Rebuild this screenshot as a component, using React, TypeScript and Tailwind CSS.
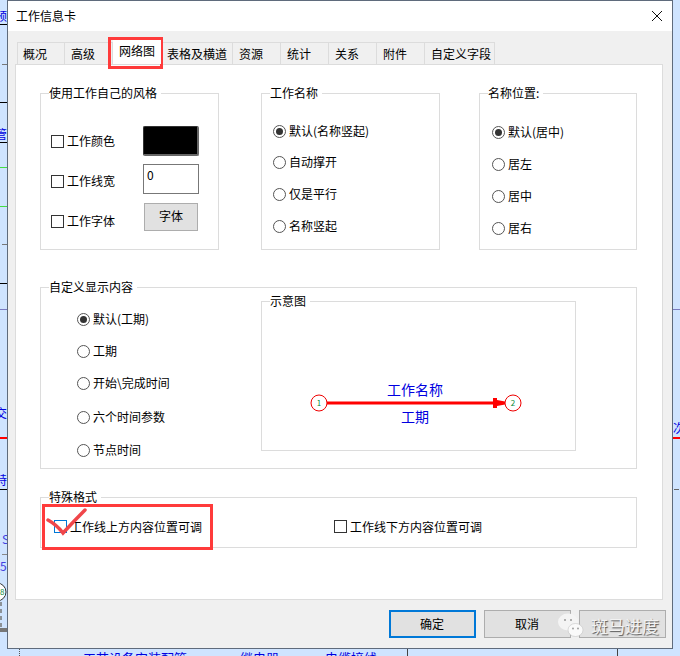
import React from "react";

const font = { fontFamily: '"Noto Sans CJK SC", "Liberation Sans", sans-serif' };

function Group({ title, className, children }: { title: string; className: string; children?: React.ReactNode }) {
  return (
    <div className={"relative border border-[#dcdcdc] " + className}>
      <span className="absolute left-[8px] top-[-9px] bg-white pr-[4px] text-[12px] leading-[16px] text-black whitespace-nowrap">{title}</span>
      {children}
    </div>
  );
}

function Radio({ label, checked, className = "" }: { label: string; checked?: boolean; className?: string }) {
  return (
    <div className={"flex items-center h-[16px] text-[12px] leading-[16px] text-black whitespace-nowrap " + className}>
      <span className="flex items-center justify-center w-[13px] h-[13px] rounded-full border border-[#555] bg-white mr-[3px] shrink-0">
        {checked && <span className="block w-[7px] h-[7px] rounded-full bg-[#333]" />}
      </span>
      {label}
    </div>
  );
}

function Check({ label, focus }: { label: string; focus?: boolean }) {
  return (
    <div className="flex items-center h-[16px] text-[12px] leading-[16px] text-black whitespace-nowrap">
      <span className={"block w-[13px] h-[13px] border bg-white mr-[3px] shrink-0 " + (focus ? "border-[#0078d7]" : "border-[#333]")} />
      {label}
    </div>
  );
}

const tabs = ["概况", "高级", "网络图", "表格及横道", "资源", "统计", "关系", "附件", "自定义字段"];
const tabW = [48, 48, 48, 72, 48, 48, 48, 48, 70];

const bgLines: { x: number; y: number; w: number; c: string }[] = [
  { x: 0, y: 24, w: 7, c: "#000000" },
  { x: 2, y: 64, w: 5, c: "#777777" },
  { x: 0, y: 102, w: 7, c: "#000000" },
  { x: 0, y: 142, w: 7, c: "#000000" },
  { x: 0, y: 167, w: 7, c: "#44dd44" },
  { x: 0, y: 206, w: 7, c: "#44dd44" },
  { x: 2, y: 244, w: 5, c: "#777777" },
  { x: 0, y: 283, w: 7, c: "#000000" },
  { x: 0, y: 309, w: 7, c: "#7a7ac0" },
  { x: 0, y: 489, w: 7, c: "#000000" },
  { x: 2, y: 554, w: 5, c: "#888888" },
  { x: 674, y: 489, w: 5, c: "#666666" },
  { x: 673, y: 309, w: 7, c: "#7a7ac0" },
];

export default function App() {
  return (
    <div style={font} className="relative w-[680px] h-[656px] overflow-hidden bg-[#cfe4ff]">
      {/* diagram fragments behind the dialog */}
      <span className="absolute left-[-5px] top-[8px] text-[12px] leading-[16px] text-[#0000e0]">预</span>
      <span className="absolute left-[-5px] top-[126px] text-[12px] leading-[16px] text-[#0000e0]">管</span>
      <span className="absolute left-[-5px] top-[405px] text-[12px] leading-[16px] text-[#0000e0]">交</span>
      <span className="absolute left-[-5px] top-[472px] text-[12px] leading-[16px] text-[#0000e0]">特</span>
      <span className="absolute left-[2px] top-[531px] text-[12px] leading-[16px] text-[#4040e0]">S</span>
      <span className="absolute left-[0px] top-[558px] text-[12px] leading-[16px] text-[#4040e0]">5</span>
      <span className="absolute left-[673px] top-[420px] text-[12px] leading-[16px] text-[#0000e0]">次</span>
      <span className="absolute left-[83px] top-[650px] text-[13px] leading-[16px] text-[#0000e0] whitespace-nowrap">工艺设备安装配管</span>
      <span className="absolute left-[240px] top-[650px] text-[13px] leading-[16px] text-[#0000e0] whitespace-nowrap">继电器</span>
      <span className="absolute left-[325px] top-[650px] text-[13px] leading-[16px] text-[#0000e0] whitespace-nowrap">电缆接线</span>
      {bgLines.map((l) => (
        <div key={l.x + "-" + l.y} style={{ left: l.x, top: l.y, width: l.w, backgroundColor: l.c }} className="absolute h-px" />
      ))}
      <div className="absolute left-0 top-[437px] w-[7px] h-[2px] bg-[#f00]" />
      <div className="absolute left-[673px] top-[437px] w-[7px] h-[2px] bg-[#f00]" />
      <div className="absolute left-[407px] top-[649px] w-px h-[7px] bg-[#444]" />
      <div className="absolute left-[617px] top-[649px] w-px h-[7px] bg-[#444]" />
      <div className="absolute left-[19px] top-[649px] w-px h-[7px] border-l border-dotted border-[#555]" />
      <svg width="8" height="50" viewBox="0 0 8 50" className="absolute left-0 top-[583px]">
        <circle cx="-3" cy="9" r="9" fill="#fff" stroke="#333" />
        <text x="0" y="12" fontSize="8" fill="#0a8a3a">8</text>
        <path d="M1 19 V46" stroke="#777" strokeWidth="1.5" strokeDasharray="4 3" />
        <path d="M0 45 H7 V49 H0 Z" fill="#777" />
      </svg>

      {/* dialog */}
      <div className="relative ml-[7px] w-[666px] h-[649px] border border-[#5f6b7c] bg-[#f0f0f0] flex flex-col">
        <div className="h-[30px] bg-white flex items-center justify-between pl-[8px] pr-[8px] shrink-0">
          <span className="text-[12px] text-black leading-[16px]">工作信息卡</span>
          <svg width="12" height="12" viewBox="0 0 12 12" className="mr-px"><path d="M1 1 L11 11 M11 1 L1 11" stroke="#111" strokeWidth="1" fill="none" /></svg>
        </div>
        <div className="flex pl-[9px] pt-[11px] h-[33px] shrink-0">
          {tabs.map((t, i) => (
            <div
              key={t}
              style={{ width: tabW[i] }}
              className={
                i === 2
                  ? "relative z-10 h-[24px] -mt-[2px] bg-white text-center text-[12px] leading-[22px] text-black"
                  : "h-[22px] border border-b-0 border-l-0 first:border-l first:pl-[5px] border-[#dcdcdc] bg-[#f0f0f0] pl-[6px] text-[12px] leading-[22px] text-black whitespace-nowrap"
              }
            >
              {t}
            </div>
          ))}
        </div>
        <div className="ml-[7px] w-[648px] h-[536px] border border-[#dcdcdc] bg-white pt-[28px] pl-[24px] shrink-0">
          <div className="flex">
            <Group title="使用工作自己的风格" className="w-[179px] h-[157px] pl-[10px] flex">
              <div className="w-[92px] pt-[39px] flex flex-col gap-[24px]">
                <Check label="工作颜色" />
                <Check label="工作线宽" />
                <Check label="工作字体" />
              </div>
              <div className="pt-[32px] flex flex-col">
                <div className="w-[56px] h-[30px] border border-[#333] border-r-[2px] border-b-[2px] border-r-[#666] border-b-[#666] rounded-[2px] bg-black" />
                <div className="mt-[8px] w-[56px] h-[30px] border border-[#777] bg-white pl-[3px] text-[12px] leading-[20px] text-black">0</div>
                <div className="mt-[9px] ml-[1px] w-[54px] h-[28px] border border-[#adadad] bg-[#e1e1e1] text-center text-[12px] leading-[24px] text-black">字体</div>
              </div>
            </Group>
            <Group title="工作名称" className="ml-[42px] w-[179px] h-[157px] pl-[11px] pt-[29px] flex flex-col gap-[16px]">
              <Radio checked label="默认(名称竖起)" />
              <Radio label="自动撑开" className="-mt-px" />
              <Radio label="仅是平行" />
              <Radio label="名称竖起" />
            </Group>
            <Group title="名称位置:" className="ml-[39px] w-[158px] h-[157px] pl-[12px] pt-[30px] flex flex-col gap-[16px]">
              <Radio checked label="默认(居中)" />
              <Radio label="居左" />
              <Radio label="居中" />
              <Radio label="居右" />
            </Group>
          </div>
          <Group title="自定义显示内容" className="mt-[37px] w-[597px] h-[182px] flex">
            <div className="pl-[36px] pt-[23px] w-[220px] flex flex-col gap-[16px]">
              <Radio checked label="默认(工期)" />
              <Radio label="工期" />
              <Radio label="开始\完成时间" />
              <Radio label="六个时间参数" className="mt-[2px]" />
              <Radio label="节点时间" className="mt-px" />
            </div>
            <Group title="示意图" className="mt-[13px] w-[315px] h-[150px]">
              <div className="relative w-full h-full">
                <span className="absolute left-[125px] top-[79px] text-[14px] leading-[16px] text-[#0000e0]">工作名称</span>
                <span className="absolute left-[139px] top-[106px] text-[14px] leading-[16px] text-[#0000e0]">工期</span>
                <svg width="220" height="20" viewBox="0 0 220 20" className="absolute left-[48px] top-[91px]">
                  <path d="M10 10 H190" stroke="#f00" strokeWidth="3" />
                  <path d="M183 5 H187 V7 L195 8.5 V11.5 L187 13 V15 H183 Z" fill="#f00" />
                  <circle cx="9" cy="10" r="8" fill="#fff" stroke="#e00" />
                  <circle cx="203" cy="10" r="8" fill="#fff" stroke="#e00" />
                  <text x="9" y="13" fontSize="8" textAnchor="middle" fill="#0a8a3a">1</text>
                  <text x="203" y="13" fontSize="8" textAnchor="middle" fill="#0a8a3a">2</text>
                </svg>
              </div>
            </Group>
          </Group>
          <Group title="特殊格式" className="mt-[28px] w-[597px] h-[51px] flex items-center">
            <div className="ml-[13px] mt-[8px] w-[280px]"><Check focus label="工作线上方内容位置可调" /></div>
            <div className="mt-[8px]"><Check label="工作线下方内容位置可调" /></div>
          </Group>
        </div>
        <div className="flex justify-end pr-[6px] pt-[10px] gap-[8px]">
          <div className="w-[87px] h-[28px] border-2 border-[#0078d7] bg-[#e1e1e1] pr-px text-center text-[12px] leading-[24px] text-black">确定</div>
          <div className="w-[87px] h-[28px] border border-[#adadad] bg-[#e1e1e1] pr-px text-center text-[12px] leading-[26px] text-black">取消</div>
          <div className="w-[87px] h-[28px] border border-[#adadad] bg-[#e1e1e1]" />
        </div>
      </div>

      {/* annotations */}
      <div className="absolute left-[108px] top-[37px] w-[55px] h-[32px] border-[3px] border-[#ff3b3b]" />
      <div className="absolute left-[42px] top-[504px] w-[171px] h-[46px] border-[3px] border-[#ff3b3b]" />
      <svg width="50" height="36" viewBox="0 0 50 36" className="absolute left-[44px] top-[505px]">
        <path d="M4 15 Q13 20 19 28 Q30 16 41 5" stroke="#f0464a" strokeWidth="3.5" fill="none" strokeLinecap="round" />
      </svg>

      {/* watermark */}
      <div className="absolute left-[557px] top-[612px] flex items-center">
        <svg width="28" height="28" viewBox="0 0 28 28">
          <ellipse cx="11" cy="10" rx="10" ry="8.5" fill="#f4f4f4" />
          <ellipse cx="18.5" cy="18" rx="7.5" ry="6.5" fill="#fafafa" stroke="#bbb" strokeWidth="0.5" />
          <circle cx="8" cy="8" r="1" fill="#999" /><circle cx="14" cy="8" r="1" fill="#999" />
          <circle cx="16" cy="16.5" r="0.9" fill="#999" /><circle cx="21" cy="16.5" r="0.9" fill="#999" />
        </svg>
        <span className="ml-[6px] text-[17px] leading-[20px] text-[#f2f2f2] [text-shadow:1px_1px_1px_#555] whitespace-nowrap">斑马进度</span>
      </div>
    </div>
  );
}
